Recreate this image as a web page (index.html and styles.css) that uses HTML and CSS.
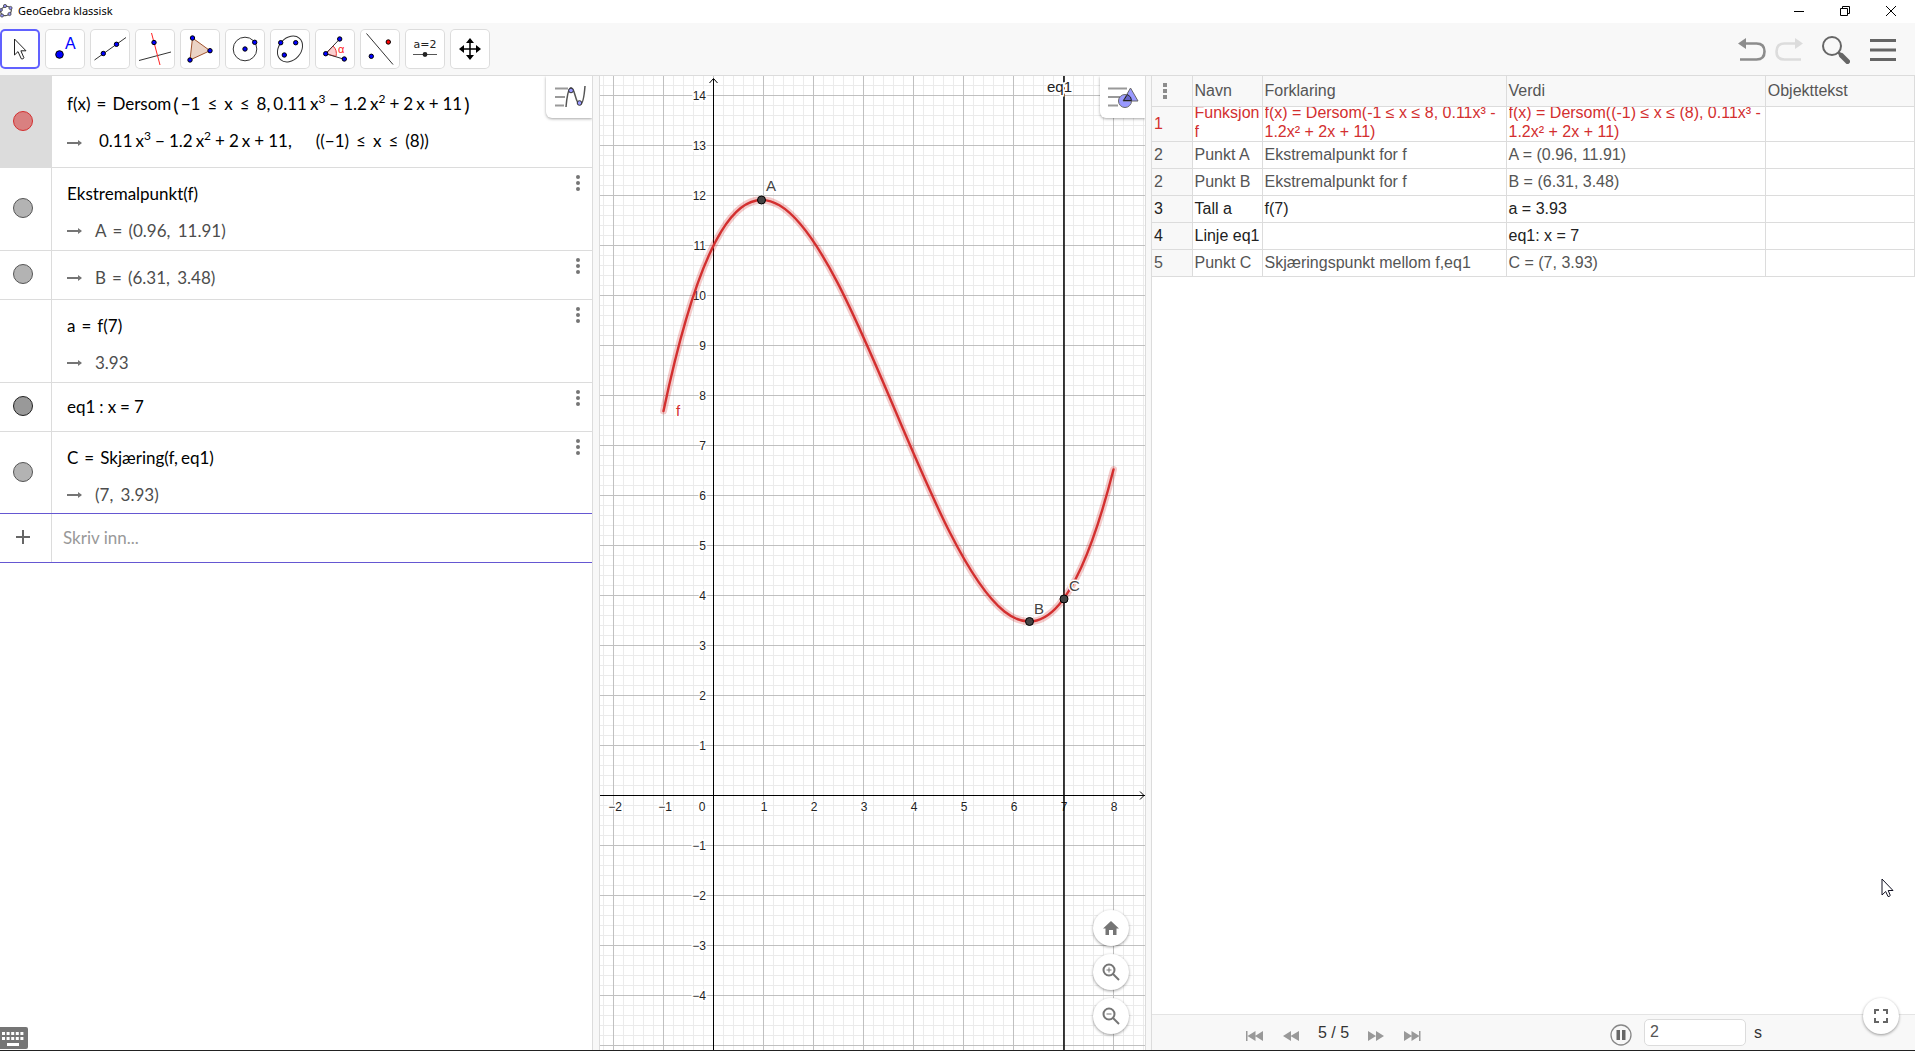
FILE: index.html
```html
<!DOCTYPE html>
<html lang="nb">
<head>
<meta charset="utf-8">
<title>GeoGebra klassisk</title>
<link rel="stylesheet" href="styles.css">
</head>
<body>
<div class="app">
  <header class="titlebar">
    <svg class="logo" width="13" height="14" viewBox="0 0 13 14"><ellipse cx="6" cy="7" rx="5.5" ry="4.5" transform="rotate(-25 6 7)" fill="none" stroke="#555" stroke-width="1.2"/><g fill="#8f8ff5" stroke="#444" stroke-width=".8"><circle cx="5" cy="2" r="1.6"/><circle cx="10.500" cy="4" r="1.600"/><circle cx="9.500" cy="10" r="1.600"/><circle cx="2" cy="11.500" r="1.600"/><circle cx="1" cy="6" r="1.400"/></g></svg>
    <span class="title">GeoGebra klassisk</span>
    <div class="window-buttons">
      <button aria-label="Minimer"><svg width="12" height="12"><path d="M1 6.500h10" stroke="#000"/></svg></button>
      <button aria-label="Gjenopprett"><svg width="12" height="12" fill="none" stroke="#000"><path d="M1.500 3.500h7v7h-7zM3.500 3.500v-2h7v7h-2"/></svg></button>
      <button aria-label="Lukk"><svg width="12" height="12" fill="none" stroke="#000"><path d="M1 1l10 10M11 1L1 11"/></svg></button>
    </div>
  </header>

  <nav class="toolbar" aria-label="Verktøy">
    <div class="tools">
      <button class="tool selected" aria-label="Flytt"><svg viewBox="0 0 40 40"><path d="M14.500 10v16l3.500-3.400 3.300 7.200q1.800.8 2.600-1l-3-7H26z" fill="#fff" stroke="#222"/></svg></button>
      <button class="tool" aria-label="Punkt"><svg viewBox="0 0 40 40"><circle cx="14.500" cy="25.500" r="3.800" fill="#00f" stroke="#000"/><text x="20" y="20" class="tool-a">A</text></svg></button>
      <button class="tool" aria-label="Linje"><svg viewBox="0 0 40 40"><path d="M4.500 31L36 8.500" stroke="#333"/><g class="dots"><circle cx="13.300" cy="24.500" r="2.200"/><circle cx="26.500" cy="15.300" r="2.200"/></g></svg></button>
      <button class="tool" aria-label="Normal linje"><svg viewBox="0 0 40 40"><path d="M4 31.500L36 23" stroke="#333"/><path d="M16.500 4L25 36" stroke="#f22"/><g class="dots"><circle cx="19" cy="13.500" r="2.200"/></g></svg></button>
      <button class="tool" aria-label="Mangekant"><svg viewBox="0 0 40 40"><path d="M12.500 9L30 21.700 10 31z" fill="#ebd3c5" stroke="#a0522d"/><g class="dots"><circle cx="12.500" cy="9" r="2.200"/><circle cx="30" cy="21.700" r="2.200"/><circle cx="10" cy="31" r="2.200"/></g></svg></button>
      <button class="tool" aria-label="Sirkel"><svg viewBox="0 0 40 40"><circle cx="20" cy="20" r="11.800" fill="none" stroke="#333"/><g class="dots"><circle cx="20" cy="20" r="2.200"/><circle cx="29.700" cy="13.300" r="2.200"/></g></svg></button>
      <button class="tool" aria-label="Ellipse"><svg viewBox="0 0 40 40"><ellipse cx="20" cy="20" rx="14.200" ry="11" transform="rotate(-48 20 20)" fill="none" stroke="#333"/><g class="dots"><circle cx="10.700" cy="13.700" r="2.200"/><circle cx="25.700" cy="13.700" r="2.200"/><circle cx="14.300" cy="26" r="2.200"/></g></svg></button>
      <button class="tool" aria-label="Vinkel"><svg viewBox="0 0 40 40"><path d="M10.700 24.700L18 17q4.500 4 3 10.500z" fill="#fbd0d0" stroke="#e33"/><path d="M24.700 10L10.700 24.700l18.600 5.600" fill="none" stroke="#333"/><text x="23" y="24" class="tool-alpha">α</text><g class="dots"><circle cx="24.700" cy="10" r="2.200"/><circle cx="10.700" cy="24.700" r="2.200"/><circle cx="29.300" cy="30" r="2.200"/></g></svg></button>
      <button class="tool" aria-label="Speiling"><svg viewBox="0 0 40 40"><path d="M6.500 4.500L33 35.500" stroke="#333"/><g class="dots"><circle cx="11.300" cy="27.300" r="2.200"/><circle cx="28.300" cy="13" r="2.200" fill="#f00"/></g></svg></button>
      <button class="tool" aria-label="Glider"><svg viewBox="0 0 40 40"><text x="20" y="19" class="tool-slider">a=2</text><path d="M8 25.500h24" stroke="#555"/><circle cx="20" cy="25.500" r="2.400" fill="#222"/></svg></button>
      <button class="tool" aria-label="Flytt grafikkfelt"><svg viewBox="0 0 40 40"><path d="M20 13v14M13 20h14" stroke="#000" stroke-width="1.500"/><path d="M20 9l4 5h-8zM20 31l4-5h-8zM9 20l5-4v8zM31 20l-5-4v8z"/></svg></button>
    </div>
    <div class="actions">
      <button class="act undo" aria-label="Angre"><svg width="28" height="26"><path d="M8 6.500h10.500q8 0 8 8t-8 8H2" fill="none" stroke="#8c8c8c" stroke-width="2.600"/><path d="M0 6.500L8 1v11z" fill="#8c8c8c"/></svg></button>
      <button class="act redo" aria-label="Gjenta"><svg width="28" height="26"><path d="M20 6.500H9.500q-8 0-8 8t8 8H26" fill="none" stroke="#dcdcdc" stroke-width="2.600"/><path d="M28 6.500L20 1v11z" fill="#dcdcdc"/></svg></button>
      <button class="act search" aria-label="Søk"><svg width="28" height="28"><circle cx="10" cy="10" r="9" fill="none" stroke="#666" stroke-width="2"/><path d="M16.500 16.500l3 3" stroke="#666" stroke-width="3"/><path d="M19.500 19.500l6 6" stroke="#666" stroke-width="5" stroke-linecap="round"/></svg></button>
      <button class="act" aria-label="Meny"><svg width="26" height="24"><path d="M0 2.500h26M0 12h26M0 21.500h26" stroke="#666" stroke-width="3"/></svg></button>
    </div>
  </nav>

  <main class="workspace">
    <section class="algebra" aria-label="Algebrafelt">
      <button class="style-button" aria-label="Stilvalg"><svg width="46" height="42"><path d="M9 12.500h13M9 21h10M9 29.500h9" stroke="#999" stroke-width="2"/><path d="M20 31C22 8 26 8 29 19S37 36 39 10" fill="none" stroke="#555" stroke-width="1.500"/><g fill="#99f" stroke="#333"><circle cx="25" cy="14.500" r="2.300"/><circle cx="33.500" cy="27" r="2.300"/></g></svg></button>
      <ul class="rows">
        <li class="row active">
          <div class="gutter"><button class="marble red" aria-label="Vis f"></button></div>
          <div class="cell">
            <div class="line">f(x)<i class="rel">=</i>Dersom<i class="big">(</i>−1<i class="le">≤</i>x<i class="le">≤</i>8,<i class="thin"></i>0.11<i class="thin"></i>x<sup>3</sup><i class="op">−</i>1.2<i class="thin"></i>x<sup>2</sup><i class="op">+</i>2<i class="thin"></i>x<i class="op">+</i>11<i class="big">)</i></div>
            <div class="line"><svg class="arrow low" width="16" height="8"><path d="M0 4h14" stroke="#757575" stroke-width="2"/><path d="M11 1l4 3-4 3z" fill="#757575"/></svg><span class="value first">0.11<i class="thin"></i>x<sup>3</sup><i class="op">−</i>1.2<i class="thin"></i>x<sup>2</sup><i class="op">+</i>2<i class="thin"></i>x<i class="op">+</i>11,<i class="quad"></i>((−1)<i class="le">≤</i>x<i class="le">≤</i>(8))</span></div>
          </div>
        </li>
        <li class="row">
          <div class="gutter"><button class="marble" aria-label="Vis A"></button></div>
          <div class="cell">
            <div class="line">Ekstremalpunkt(f)</div>
            <div class="line out"><svg class="arrow" width="16" height="8"><path d="M0 4h14" stroke="#757575" stroke-width="2"/><path d="M11 1l4 3-4 3z" fill="#757575"/></svg><span class="value">A<i class="rel">=</i>(0.96,<i class="thin"></i>&nbsp;11.91)</span></div>
          </div>
          <button class="more" aria-label="Mer"><svg width="6" height="18" fill="#757575"><circle cx="3" cy="3" r="2"/><circle cx="3" cy="9" r="2"/><circle cx="3" cy="15" r="2"/></svg></button>
        </li>
        <li class="row">
          <div class="gutter"><button class="marble" aria-label="Vis B"></button></div>
          <div class="cell single lower">
            <div class="line out"><svg class="arrow" width="16" height="8"><path d="M0 4h14" stroke="#757575" stroke-width="2"/><path d="M11 1l4 3-4 3z" fill="#757575"/></svg><span class="value">B<i class="rel">=</i>(6.31,<i class="thin"></i>&nbsp;3.48)</span></div>
          </div>
          <button class="more" aria-label="Mer"><svg width="6" height="18" fill="#757575"><circle cx="3" cy="3" r="2"/><circle cx="3" cy="9" r="2"/><circle cx="3" cy="15" r="2"/></svg></button>
        </li>
        <li class="row">
          <div class="gutter"></div>
          <div class="cell">
            <div class="line">a<i class="rel">=</i>f(7)</div>
            <div class="line out"><svg class="arrow" width="16" height="8"><path d="M0 4h14" stroke="#757575" stroke-width="2"/><path d="M11 1l4 3-4 3z" fill="#757575"/></svg><span class="value">3.93</span></div>
          </div>
          <button class="more" aria-label="Mer"><svg width="6" height="18" fill="#757575"><circle cx="3" cy="3" r="2"/><circle cx="3" cy="9" r="2"/><circle cx="3" cy="15" r="2"/></svg></button>
        </li>
        <li class="row">
          <div class="gutter"><button class="marble dark" aria-label="Vis eq1"></button></div>
          <div class="cell single">
            <div class="line">eq1<i class="op">:</i>x<i class="op">=</i>7</div>
          </div>
          <button class="more" aria-label="Mer"><svg width="6" height="18" fill="#757575"><circle cx="3" cy="3" r="2"/><circle cx="3" cy="9" r="2"/><circle cx="3" cy="15" r="2"/></svg></button>
        </li>
        <li class="row last">
          <div class="gutter"><button class="marble" aria-label="Vis C"></button></div>
          <div class="cell">
            <div class="line">C<i class="rel">=</i>Skjæring(f,<i class="thin"></i>eq1)</div>
            <div class="line out"><svg class="arrow" width="16" height="8"><path d="M0 4h14" stroke="#757575" stroke-width="2"/><path d="M11 1l4 3-4 3z" fill="#757575"/></svg><span class="value">(7,<i class="thin"></i>&nbsp;3.93)</span></div>
          </div>
          <button class="more" aria-label="Mer"><svg width="6" height="18" fill="#757575"><circle cx="3" cy="3" r="2"/><circle cx="3" cy="9" r="2"/><circle cx="3" cy="15" r="2"/></svg></button>
        </li>
        <li class="row entry">
          <div class="gutter"><svg width="14" height="14"><path d="M7 0v14M0 7h14" stroke="#666" stroke-width="2"/></svg></div>
          <input class="entry-input" type="text" aria-label="Skriv inn" placeholder="Skriv inn...">
        </li>
      </ul>
      <button class="keyboard" aria-label="Tastatur"><svg width="28" height="22"><path d="M0 0h26q2 0 2 2v18q0 2-2 2H0z" fill="#757575"/><path d="M2 6.500h22M2 11.500h22" stroke="#fff" stroke-width="3" stroke-dasharray="3 1.600"/><path d="M7 17.500h12" stroke="#fff" stroke-width="3"/></svg></button>
    </section>

    <div class="divider"></div>

    <section class="graphics" aria-label="Grafikkfelt">
      <svg class="plot" width="100%" height="100%">
        <defs>
          <pattern id="minor" x="113" y="719" width="10" height="10" patternUnits="userSpaceOnUse"><path d="M0 .5h10M.5 0v10" stroke="#ebebeb"/></pattern>
          <pattern id="major" x="113" y="719" width="50" height="50" patternUnits="userSpaceOnUse"><path d="M0 .5h50M.5 0v50" stroke="#c0c0c0"/></pattern>
        </defs>
        <rect width="100%" height="100%" fill="url(#minor)"/>
        <rect width="100%" height="100%" fill="url(#major)"/>
        <g stroke="#000">
          <line x1="113.500" x2="113.500" y1="3" y2="100%"/>
          <line x1="0" x2="100%" y1="719.500" y2="719.500"/>
          <path d="M109.500 7l4-4.500 4 4.500" fill="none"/>
          <svg x="100%" y="719" overflow="visible"><path d="M-5-3.500L-1 .5-5 4.500" fill="none"/></svg>
        </g>
        <g class="ticks y">
          <text x="106" y="24">14</text><text x="106" y="74">13</text><text x="106" y="124">12</text><text x="106" y="174">11</text><text x="106" y="224">10</text><text x="106" y="274">9</text><text x="106" y="324">8</text><text x="106" y="374">7</text><text x="106" y="424">6</text><text x="106" y="474">5</text><text x="106" y="524">4</text><text x="106" y="574">3</text><text x="106" y="624">2</text><text x="106" y="674">1</text><text x="106" y="774">−1</text><text x="106" y="824">−2</text><text x="106" y="874">−3</text><text x="106" y="924">−4</text>
        </g>
        <g class="ticks x">
          <text x="15" y="735">−2</text><text x="65" y="735">−1</text><text x="102" y="735">0</text><text x="164" y="735">1</text><text x="214" y="735">2</text><text x="264" y="735">3</text><text x="314" y="735">4</text><text x="364" y="735">5</text><text x="414" y="735">6</text><text x="464" y="735">7</text><text x="514" y="735">8</text>
        </g>
        <line x1="464" x2="464" y1="0" y2="100%" stroke="#000" stroke-opacity=".75" stroke-width="2"/>
        <g fill="none" stroke="#d32f2f" stroke-linecap="round">
          <path d="M63.500 335C213.500-374.500 363.500 981.500 513.500 393.500" stroke-width="7" stroke-opacity=".25"/>
          <path d="M63.500 335C213.500-374.500 363.500 981.500 513.500 393.500" stroke-width="2.400"/>
        </g>
        <g fill="#444" stroke="#000"><circle cx="161.500" cy="124" r="4"/><circle cx="429.500" cy="545.500" r="4"/><circle cx="464" cy="523" r="4"/></g>
        <g class="labels">
          <text x="166" y="115">A</text><text x="434" y="538">B</text><text x="469" y="515">C</text>
          <text x="76" y="340" class="label-f">f</text><text x="447" y="16" class="label-eq">eq1</text>
        </g>
      </svg>
      <button class="style-button" aria-label="Stilvalg"><svg width="45" height="42"><path d="M8 12.500h19M8 21h12M8 29.500h10" stroke="#999" stroke-width="2"/><circle cx="25" cy="25" r="6.500" fill="#99f" stroke="#666"/><path d="M30.500 12l7.500 13H23z" fill="#99f" stroke="#666"/><path d="M23.500 24.500l4-6q4 2 4 6z" fill="#6464c8" stroke="#222"/></svg></button>
      <div class="zoom">
        <button class="round" aria-label="Standardvisning"><svg width="18" height="18"><path d="M9 2l8 7.500h-2.500V16H11v-5H7v5H3.500V9.500H1z" fill="#757575"/></svg></button>
        <button class="round" aria-label="Forstørr"><svg width="18" height="18" fill="none" stroke="#757575" stroke-width="2"><circle cx="7" cy="7" r="5.500"/><path d="M11 11l6 6"/><path d="M4.500 7h5M7 4.500v5" stroke-width="1"/></svg></button>
        <button class="round" aria-label="Forminsk"><svg width="18" height="18" fill="none" stroke="#757575" stroke-width="2"><circle cx="7" cy="7" r="5.500"/><path d="M11 11l6 6"/><path d="M4.500 7h5" stroke-width="1"/></svg></button>
      </div>
    </section>

    <div class="divider"></div>

    <section class="protocol" aria-label="Konstruksjonsforklaring">
      <table class="steps">
        <colgroup><col class="c-no"><col class="c-name"><col class="c-desc"><col class="c-val"><col class="c-cap"></colgroup>
        <thead><tr><th><button class="more-head" aria-label="Kolonner"><svg width="4" height="18" fill="#8c8c8c"><path d="M0 1h4v4H0zM0 7h4v4H0zM0 13h4v4H0z"/></svg></button></th><th>Navn</th><th>Forklaring</th><th>Verdi</th><th>Objekttekst</th></tr></thead>
        <tbody>
          <tr class="tall red-text"><td>1</td><td><div class="clip">Funksjon f</div></td><td><div class="clip">f(x) = Dersom(-1 ≤ x ≤ 8, 0.11x³ - 1.2x² + 2x + 11)</div></td><td><div class="clip">f(x) = Dersom((-1) ≤ x ≤ (8), 0.11x³ - 1.2x² + 2x + 11)</div></td><td></td></tr>
          <tr><td>2</td><td>Punkt A</td><td>Ekstremalpunkt for f</td><td>A = (0.96, 11.91)</td><td></td></tr>
          <tr><td>2</td><td>Punkt B</td><td>Ekstremalpunkt for f</td><td>B = (6.31, 3.48)</td><td></td></tr>
          <tr class="black-text"><td>3</td><td>Tall a</td><td>f(7)</td><td>a = 3.93</td><td></td></tr>
          <tr class="black-text"><td>4</td><td>Linje eq1</td><td></td><td>eq1: x = 7</td><td></td></tr>
          <tr><td>5</td><td>Punkt C</td><td>Skjæringspunkt mellom f,eq1</td><td>C = (7, 3.93)</td><td></td></tr>
        </tbody>
      </table>
      <footer class="player">
        <div class="steps-nav">
          <button aria-label="Første"><svg width="18" height="12" fill="#999"><path d="M0 1h1.500v10H0zM9.500 1v10L1.500 6zM17 1v10L9 6z"/></svg></button>
          <button aria-label="Forrige"><svg width="18" height="12" fill="#999"><path d="M9 1v10L1 6zM17 1v10L8.500 6z"/></svg></button>
          <span class="count">5 / 5</span>
          <button aria-label="Neste"><svg width="18" height="12" fill="#999"><path d="M1 1v10l8-5zM9 1v10l8-5z"/></svg></button>
          <button aria-label="Siste"><svg width="18" height="12" fill="#999"><path d="M1 1v10l8-5zM8.500 1v10l8-5zM16 1h1.500v10H16z"/></svg></button>
        </div>
        <div class="autoplay">
          <button class="pause" aria-label="Pause"><svg width="22" height="22"><circle cx="11" cy="11" r="10" fill="none" stroke="#888" stroke-width="1.300"/><path d="M6.500 6H10v10H6.500zM12 6h3.500v10H12z" fill="#666"/></svg></button>
          <input class="speed" id="speed" type="text" value="2">
          <label class="unit" for="speed">s</label>
        </div>
      </footer>
      <button class="round fullscreen" aria-label="Fullskjerm"><svg width="16" height="16" fill="none" stroke="#666" stroke-width="2"><path d="M2 6V2h4M10 2h4v4M14 10v4h-4M6 14H2v-4"/></svg></button>
      <svg class="pointer" width="14" height="20"><path d="M1 1v16l3.700-3.500 2.300 5q2 .3 2.200-1.300l-2-4.700H12z" fill="#fff" stroke="#112"/></svg>
    </section>
  </main>
</div>
</body>
</html>
```
FILE: styles.css
```css
* { box-sizing: border-box; }
body { margin: 0; font-family: "Liberation Sans", Arial, sans-serif; font-size: 16px; color: #222; }
button { margin: 0; padding: 0; border: 0; background: none; font: inherit; color: inherit; }
svg { display: block; }

.app { display: flex; flex-direction: column; height: 100vh; border-bottom: 1px solid #222; background: #fff; }

/* Window title */
.titlebar { display: flex; align-items: center; height: 23px; padding-bottom: 2px; }
.title { flex: 1; margin-left: 5px; font-family: "Noto Sans", sans-serif; font-size: 11px; line-height: 21px; color: #000; }
.window-buttons { display: flex; padding-right: 1px; }
.window-buttons button { display: flex; align-items: center; justify-content: center; width: 46px; height: 20px; }

/* Toolbar */
.toolbar { display: flex; align-items: center; justify-content: space-between; height: 53px; background: #f8f8f8; border-bottom: 1px solid #dcdcdc; }
.tools { display: flex; gap: 5px; }
.tool { width: 40px; height: 40px; border-radius: 5px; background: #fff; box-shadow: inset 0 0 0 1px #dcdcdc; }
.tool.selected { box-shadow: inset 0 0 0 2px #6161ff; }
.tool svg { width: 40px; height: 40px; }
.dots { fill: #00f; stroke: #000; }
.tool-a { font-size: 16px; fill: #00f; }
.tool-alpha { font-size: 11px; fill: #f22; }
.tool-slider { font-family: "DejaVu Sans", sans-serif; font-size: 11px; text-anchor: middle; fill: #222; }
.actions { display: flex; align-items: center; padding: 2px 19px 0 0; }
.undo { margin-right: 9px; }
.redo { margin-right: 19px; }
.search { margin-right: 20px; }

/* Three views side by side */
.workspace { flex: 1; min-height: 0; display: grid; grid-template-columns: 592fr 8px 545fr 7px 763fr; }
.divider { background: #f8f8f8; border: 1px solid #dcdcdc; border-width: 0 1px; }
.algebra, .graphics, .protocol { position: relative; min-width: 0; overflow: hidden; }
.style-button { position: absolute; top: 0; right: 0; border-radius: 0 0 0 6px; background: #fff; box-shadow: 0 1px 3px rgba(0, 0, 0, .35); }

/* Algebra */
.algebra { font-family: Lato, sans-serif; font-size: 17px; color: #000; }
.rows { margin: 0; padding: 0; list-style: none; }
.row { display: grid; grid-template-columns: 52px 1fr; position: relative; border-bottom: 1px solid #dcdcdc; }
.gutter { display: flex; align-items: center; justify-content: center; padding: 0 5px 2px 0; border-right: 1px solid #dcdcdc; }
.active .gutter { background: #dcdcdc; }
.marble { width: 20px; height: 20px; border: 1px solid #555; border-radius: 50%; background: #b3b3b3; }
.marble.red { border-color: #d32f2f; background: #d98080; }
.marble.dark { border-color: #222; background: #999; }
.cell { padding: 7px 0 1px 15px; }
.active .cell { padding: 9px 0 8px 15px; }
.cell.single { padding: 5px 0 6px 15px; }
.cell.lower { padding: 8px 0 3px 15px; }
.last .cell { padding-bottom: 0; }
.line { display: flex; align-items: center; height: 37px; white-space: nowrap; }
.out { color: #4d4d4d; }
.value { display: flex; align-items: center; margin-left: 12px; }
.value.first { margin-left: 16px; }
.line i { font-style: normal; }
.line sup { font-size: 12px; line-height: 12px; align-self: center; padding-bottom: 10px; }
.rel { margin: 0 6px; }
.le { margin: 0 7px; }
.op { margin: 0 4px; }
.thin { width: 3px; }
.quad { width: 24px; }
.big { font-size: 20px; margin: 0 2px; }
.low { margin-top: 4px; }
.more { position: absolute; top: 6px; right: 11px; }
.last.row, .row.entry { border-bottom-color: #6557d2; }
.entry-input { height: 48px; padding: 0 0 2px 11px; border: 0; outline: 0; font: inherit; background: none; }
.entry-input::placeholder { color: #999; opacity: 1; }
.keyboard { position: absolute; left: 0; bottom: 1px; }

/* Graphics */
.ticks text { font-size: 12px; fill: #222; stroke: #fff; stroke-width: 3px; paint-order: stroke; }
.ticks.y text { text-anchor: end; }
.ticks.x text { text-anchor: middle; }
.labels text { font-size: 15px; fill: #444; stroke: #fff; stroke-width: 3px; paint-order: stroke; }
.labels .label-f { fill: #d32f2f; }
.labels .label-eq { fill: #222; }
.round { display: flex; align-items: center; justify-content: center; width: 36px; height: 36px; border-radius: 50%; background: #fff; box-shadow: 0 1px 3px rgba(0, 0, 0, .4); }
.zoom { position: absolute; right: 16px; bottom: 16px; display: grid; gap: 8px; }

/* Construction steps */
.protocol { display: flex; flex-direction: column; }
.steps { width: 100%; table-layout: fixed; border-collapse: collapse; line-height: 19px; color: #555; }
.c-no { width: 40px; }
.c-name { width: 70px; }
.c-desc { width: 32%; }
.c-val { width: 34%; }
.steps th, .steps td { height: 27px; padding: 0 0 0 2px; border: 1px solid #dcdcdc; border-top: 0; text-align: left; font-weight: 400; }
.steps th:first-child, .steps td:first-child { border-left: 0; }
.steps th { height: 30px; background: #f8f8f8; }
.steps td:first-child { background: #f8f8f8; }
.steps .tall td { height: 35px; }
.clip { display: flex; align-items: center; height: 34px; padding-bottom: 4px; overflow: hidden; }
.red-text { color: #d32f2f; }
.black-text { color: #222; }
.more-head { display: block; margin-left: 9px; }
.player { display: flex; align-items: center; justify-content: space-between; margin-top: auto; height: 36px; padding: 0 153px 0 94px; border-top: 1px solid #e4e4e4; background: #f8f8f8; color: #333; }
.steps-nav { display: flex; align-items: center; gap: 18px; }
.steps-nav button { padding-top: 6px; }
.count { white-space: nowrap; }
.autoplay { display: flex; align-items: center; }
.pause { margin-right: 12px; padding-top: 4px; }
.speed { width: 102px; height: 27px; padding: 0 0 2px 5px; border: 1px solid #dcdcdc; border-radius: 5px; font: inherit; color: #555; }
.unit { margin-left: 8px; }
.fullscreen { position: absolute; right: 16px; bottom: 16px; }
.pointer { position: absolute; right: 20px; bottom: 152px; }
```
